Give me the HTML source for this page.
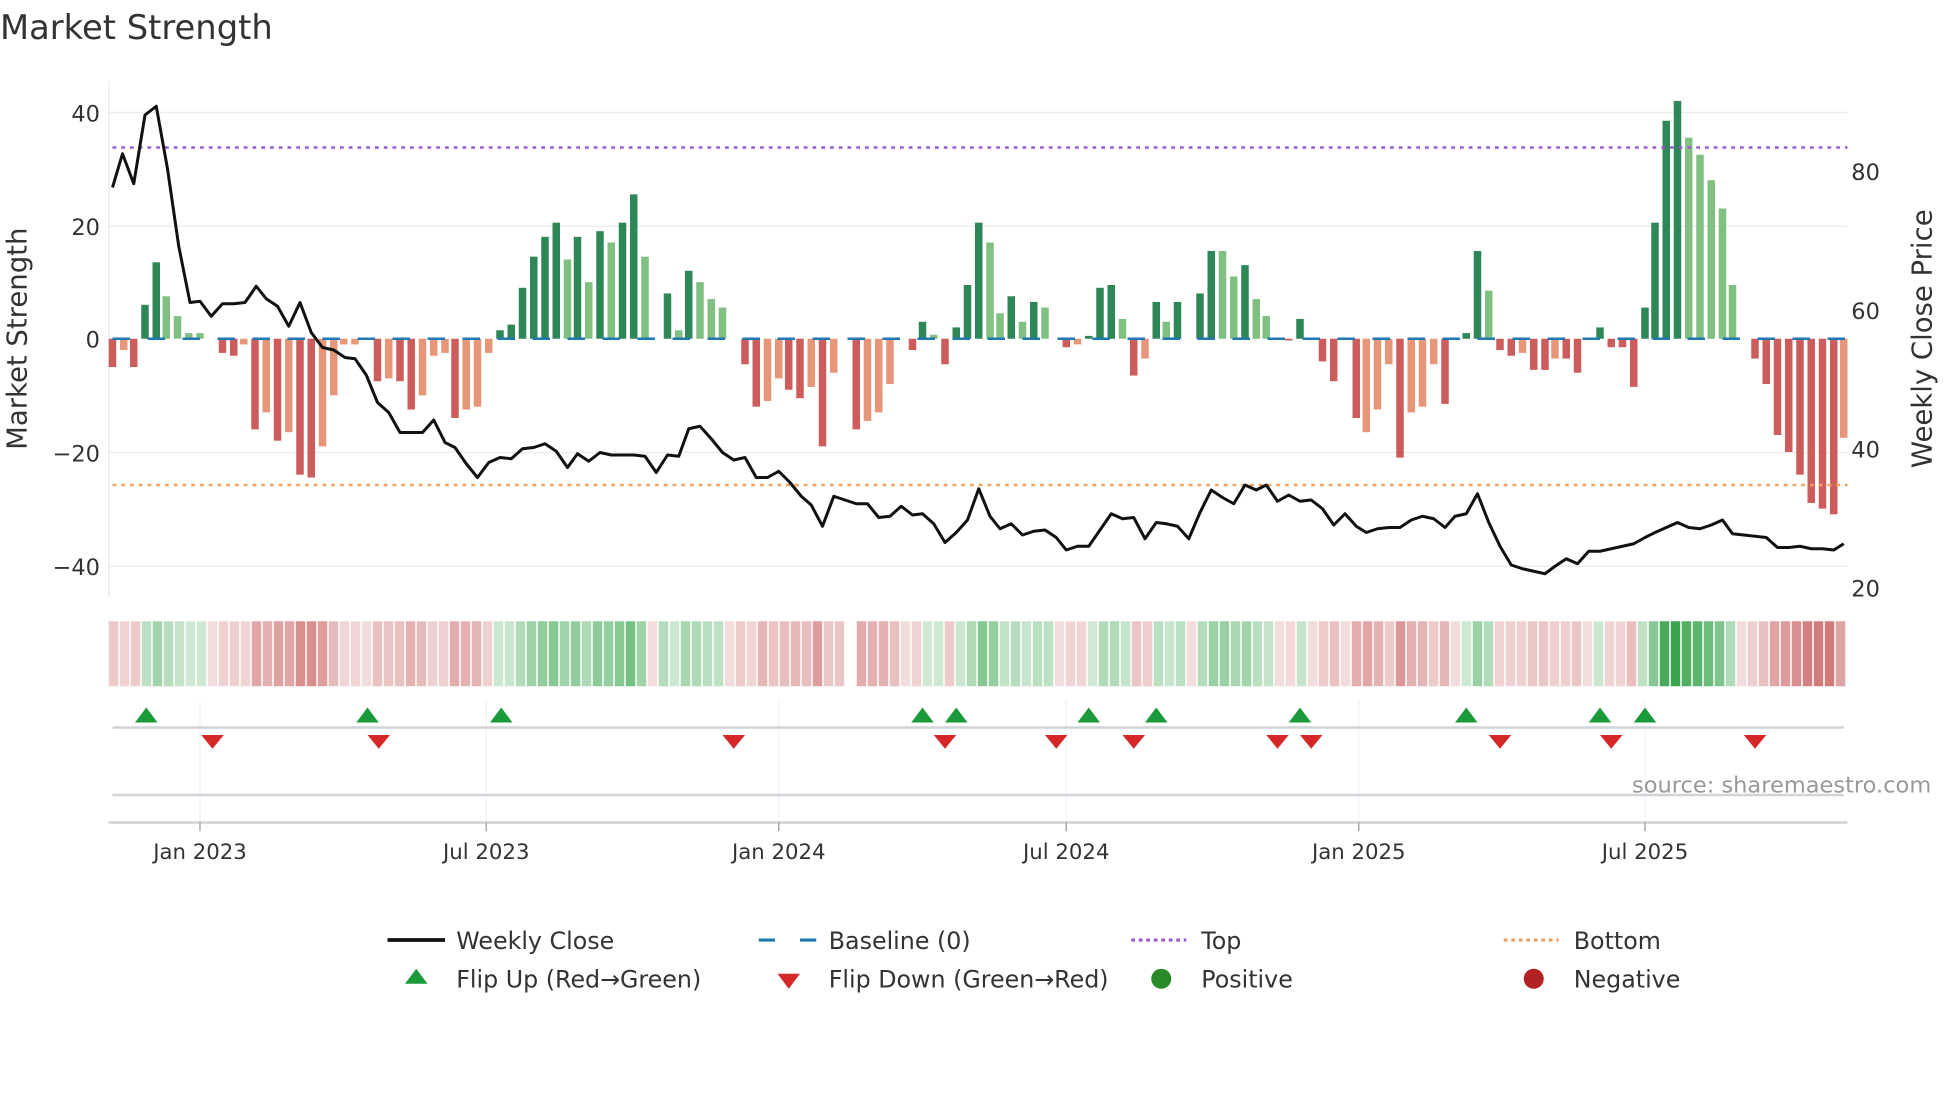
<!DOCTYPE html>
<html><head><meta charset="utf-8"><style>
html,body{margin:0;padding:0;background:#fff;overflow:hidden}
svg{display:block}
text{font-family:"DejaVu Sans","Liberation Sans",sans-serif;fill:#333}
</style></head><body>
<svg id="s" width="1960" height="1102" viewBox="0 0 1568 881.6" preserveAspectRatio="none" xmlns="http://www.w3.org/2000/svg">
<rect width="1568" height="882" fill="#fff"/>
<text x="0" y="31" font-size="27" fill="#333">Market Strength</text>
<g stroke="#ececf2" stroke-width="1.2">
<line x1="87" y1="90" x2="1478" y2="90"/><line x1="87" y1="181" x2="1478" y2="181"/>
<line x1="87" y1="362" x2="1478" y2="362"/><line x1="87" y1="453" x2="1478" y2="453"/>
<line x1="87" y1="65" x2="87" y2="478"/>
</g>
<g stroke="#f0f3f5" stroke-width="1">
<line x1="160" y1="560" x2="160" y2="658"/><line x1="389" y1="560" x2="389" y2="658"/><line x1="623" y1="560" x2="623" y2="658"/><line x1="853" y1="560" x2="853" y2="658"/><line x1="1087" y1="560" x2="1087" y2="658"/><line x1="1316" y1="560" x2="1316" y2="658"/>
</g>
<g font-size="18" text-anchor="end">
<text x="80" y="97">40</text><text x="80" y="188">20</text><text x="80" y="278">0</text><text x="80" y="369">−20</text><text x="80" y="460">−40</text>
</g>
<g font-size="18">
<text x="1481" y="144">80</text><text x="1481" y="255">60</text><text x="1481" y="366">40</text><text x="1481" y="477">20</text>
</g>
<text transform="translate(21,271) rotate(-90)" font-size="22" text-anchor="middle">Market Strength</text>
<text transform="translate(1545,271) rotate(-90)" font-size="22" text-anchor="middle">Weekly Close Price</text>
<g id="strip"></g>
<g id="bars"></g>
<line x1="90" y1="271" x2="1476" y2="271" stroke="#1f77b4" stroke-width="2" stroke-dasharray="14,14"/>
<line x1="90" y1="118" x2="1478" y2="118" stroke="#9b59d6" stroke-width="2" stroke-dasharray="3,4"/>
<line x1="90" y1="388" x2="1478" y2="388" stroke="#f0a060" stroke-width="2" stroke-dasharray="3,4"/>
<polyline id="price" fill="none" stroke="#111" stroke-width="2.4" stroke-linejoin="round"/>
<line x1="90" y1="582" x2="1475" y2="582" stroke="#d0d4d8" stroke-width="2"/>
<line x1="90" y1="636" x2="1475" y2="636" stroke="#d0d4d8" stroke-width="2"/>
<line x1="87" y1="658" x2="1478" y2="658" stroke="#cfd3d6" stroke-width="2"/>
<g stroke="#999" stroke-width="1"><line x1="160" y1="658" x2="160" y2="665"/><line x1="389" y1="658" x2="389" y2="665"/><line x1="623" y1="658" x2="623" y2="665"/><line x1="853" y1="658" x2="853" y2="665"/><line x1="1087" y1="658" x2="1087" y2="665"/><line x1="1316" y1="658" x2="1316" y2="665"/></g>
<g id="marks"></g>
<g font-size="17" text-anchor="middle">
<text x="160" y="687">Jan 2023</text><text x="389" y="687">Jul 2023</text><text x="623" y="687">Jan 2024</text><text x="853" y="687">Jul 2024</text><text x="1087" y="687">Jan 2025</text><text x="1316" y="687">Jul 2025</text>
</g>
<text x="1545" y="634" font-size="18" text-anchor="end" fill="#999" style="fill:#999">source: sharemaestro.com</text>
<g font-size="19">
<line x1="310" y1="752" x2="356" y2="752" stroke="#111" stroke-width="3"/>
<text x="365" y="759">Weekly Close</text>
<line x1="607" y1="752" x2="653" y2="752" stroke="#1f77b4" stroke-width="2.5" stroke-dasharray="13,20"/>
<text x="663" y="759">Baseline (0)</text>
<line x1="905" y1="752" x2="949" y2="752" stroke="#9b59d6" stroke-width="2.5" stroke-dasharray="3,3"/>
<text x="961" y="759">Top</text>
<line x1="1203" y1="752" x2="1247" y2="752" stroke="#f0a060" stroke-width="2.5" stroke-dasharray="3,3"/>
<text x="1259" y="759">Bottom</text>
<polygon points="333,775 342,787 324,787" fill="#1a9a3a"/>
<text x="365" y="790">Flip Up (Red→Green)</text>
<polygon points="622,779 640,779 631,791" fill="#d62728"/>
<text x="663" y="790">Flip Down (Green→Red)</text>
<circle cx="929" cy="783" r="8" fill="#2a8a2a"/>
<text x="961" y="790">Positive</text>
<circle cx="1227" cy="783" r="8" fill="#b22222"/>
<text x="1259" y="790">Negative</text>
</g>
</svg>
<script>
var NS="http://www.w3.org/2000/svg";
function el(p,t,a){var e=document.createElementNS(NS,t);for(var k in a)e.setAttribute(k,a[k]);p.appendChild(e);return e;}
var B=[[90,-5,1],[99,-2,0],[107,-5,1],[116,6,1],[125,13.5,1],[133,7.5,0],[142,4,0],[151,1,0],[160,1,0],[169,0,1],[178,-2.5,1],[187,-3,1],[195,-1,0],[204,-16,1],[213,-13,0],[222,-18,1],[231,-16.5,0],[240,-24,1],[249,-24.5,1],[258,-19,0],[267,-10,0],[275,-1,0],[284,-1,0],[293,0,1],[302,-7.5,1],[311,-7,0],[320,-7.5,1],[329,-12.5,1],[338,-10,0],[347,-3,0],[356,-2.5,0],[364,-14,1],[373,-12.5,0],[382,-12,0],[391,-2.5,0],[400,1.5,1],[409,2.5,1],[418,9,1],[427,14.5,1],[436,18,1],[445,20.5,1],[454,14,0],[462,18,1],[471,10,0],[480,19,1],[489,17,0],[498,20.5,1],[507,25.5,1],[516,14.5,0],[525,0,1],[534,8,1],[543,1.5,0],[551,12,1],[560,10,0],[569,7,0],[578,5.5,0],[587,0,1],[596,-4.5,1],[604,-1,0],[605,-12,1],[614,-11,0],[623,-7,0],[631,-9,1],[640,-10.5,1],[649,-8.5,0],[658,-19,1],[667,-6,0],[685,-16,1],[694,-14.5,0],[703,-13,0],[712,-8,0],[721,0,1],[730,-2,1],[738,3,1],[747,0.7,0],[756,-4.5,1],[765,2,1],[774,9.5,1],[783,20.5,1],[792,17,0],[800,4.5,0],[809,7.5,1],[818,3,0],[827,6.5,1],[836,5.5,0],[845,0,1],[853,-1.5,1],[862,-1,0],[871,0.5,1],[880,9,1],[889,9.5,1],[898,3.5,0],[907,-6.5,1],[916,-3.5,0],[925,6.5,1],[933,3,0],[942,6.5,1],[951,0,1],[960,8,1],[969,15.5,1],[978,15.5,0],[987,11,0],[996,13,1],[1005,7,0],[1013,4,0],[1022,0,1],[1031,-0.3,1],[1040,3.5,1],[1049,0,1],[1058,-4,1],[1067,-7.5,1],[1076,0,1],[1085,-14,1],[1093,-16.5,0],[1102,-12.5,0],[1111,-4.5,0],[1120,-21,1],[1129,-13,0],[1138,-12,0],[1147,-4.5,0],[1156,-11.5,1],[1164,0,1],[1173,1,1],[1182,15.5,1],[1191,8.5,0],[1200,-2,1],[1209,-3,1],[1218,-2.5,0],[1227,-5.5,1],[1236,-5.5,1],[1244,-3.5,0],[1253,-3.5,1],[1262,-6,1],[1271,0,1],[1280,2,1],[1289,-1.5,1],[1298,-1.5,1],[1307,-8.5,1],[1316,5.5,1],[1324,20.5,1],[1333,38.5,1],[1342,42,1],[1351,35.5,0],[1360,32.5,0],[1369,28,0],[1378,23,0],[1386,9.5,0],[1395,0,1],[1404,-3.5,1],[1413,-8,1],[1422,-17,1],[1431,-20,1],[1440,-24,1],[1449,-29,1],[1458,-30,1],[1467,-31,1],[1475,-17.5,0]];
var bars=document.getElementById('bars'),strip=document.getElementById('strip');
B.forEach(function(b){
 var x=b[0],v=b[1],d=b[2];if(x==604)return;
 var h=Math.abs(v)*4.53;
 var c=v>=0?(d?'#2e8756':'#80c080'):(d?'#cd5c5c':'#e8967a');
 if(h>0.5)el(bars,'rect',{x:x-3,y:v>=0?271-h:271,width:6,height:h,fill:c});
});
var sx=[];for(var i=0;i<158;i++)sx.push(87+i*8.8);
function val(x){var best=B[0],bd=1e9;B.forEach(function(b){var dd=Math.abs(b[0]-x);if(dd<bd){bd=dd;best=b;}});return best[1];}
sx.forEach(function(x){
 if(x>671&&x<681)return;
 var v=val(x+4.4);var a=Math.min(1,0.22+Math.abs(v)/40*0.7);
 var c=v>0.2?'rgba(50,160,70,'+a+')':(v<-0.2?'rgba(195,80,80,'+a+')':'rgba(195,80,80,0.2)');
 el(strip,'rect',{x:x,y:497,width:7.6,height:52,fill:c});
});
var P=[[90,150],[98,123],[107,147],[116,92],[125,85],[134,135],[143,197],[152,242],[160,241],[169,253],[178,243],[187,243],[196,242],[205,229],[213,239],[222,245],[231,261],[240,242],[249,266],[258,278],[267,280],[276,286],[284,287],[293,300],[302,322],[311,330],[320,346],[329,346],[338,346],[347,336],[356,354],[364,358],[373,371],[382,382],[391,370],[400,366],[409,367],[418,359],[427,358],[436,355],[445,361],[454,374],[462,363],[471,369],[480,362],[489,364],[498,364],[507,364],[516,365],[525,378],[534,364],[543,365],[551,343],[560,341],[569,351],[578,362],[587,368],[596,366],[605,382],[614,382],[623,377],[632,386],[641,397],[649,404],[658,421],[667,397],[676,400],[685,403],[694,403],[703,414],[712,413],[721,405],[730,412],[738,411],[747,419],[756,434],[765,426],[774,416],[783,391],[792,413],[800,423],[809,419],[818,428],[827,425],[836,424],[845,430],[853,440],[862,437],[871,437],[880,424],[889,411],[898,415],[907,414],[916,431],[925,418],[933,419],[942,421],[951,431],[960,410],[969,392],[978,398],[987,403],[996,388],[1005,392],[1013,388],[1022,401],[1031,396],[1040,401],[1049,400],[1058,407],[1067,420],[1076,411],[1085,421],[1093,426],[1102,423],[1111,422],[1120,422],[1129,416],[1138,413],[1147,415],[1156,422],[1164,413],[1173,411],[1182,395],[1191,418],[1200,437],[1209,452],[1218,455],[1227,457],[1236,459],[1244,453],[1253,447],[1262,451],[1271,441],[1280,441],[1289,439],[1298,437],[1307,435],[1316,430],[1324,426],[1333,422],[1342,418],[1351,422],[1360,423],[1369,420],[1378,416],[1386,427],[1395,428],[1404,429],[1413,430],[1422,438],[1431,438],[1440,437],[1449,439],[1458,439],[1467,440],[1475,435]];
document.getElementById('price').setAttribute('points',P.map(function(p){return p.join(',')}).join(' '));
var m=document.getElementById('marks');
[117,294,401,738,765,871,925,1040,1173,1280,1316].forEach(function(x){el(m,'polygon',{points:x+',566 '+(x+9)+',578 '+(x-9)+',578',fill:'#1a9a3a'});});
[170,303,587,756,845,907,1022,1049,1200,1289,1404].forEach(function(x){el(m,'polygon',{points:(x-9)+',588 '+(x+9)+',588 '+x+',599',fill:'#d62728'});});
</script>
</body></html>
